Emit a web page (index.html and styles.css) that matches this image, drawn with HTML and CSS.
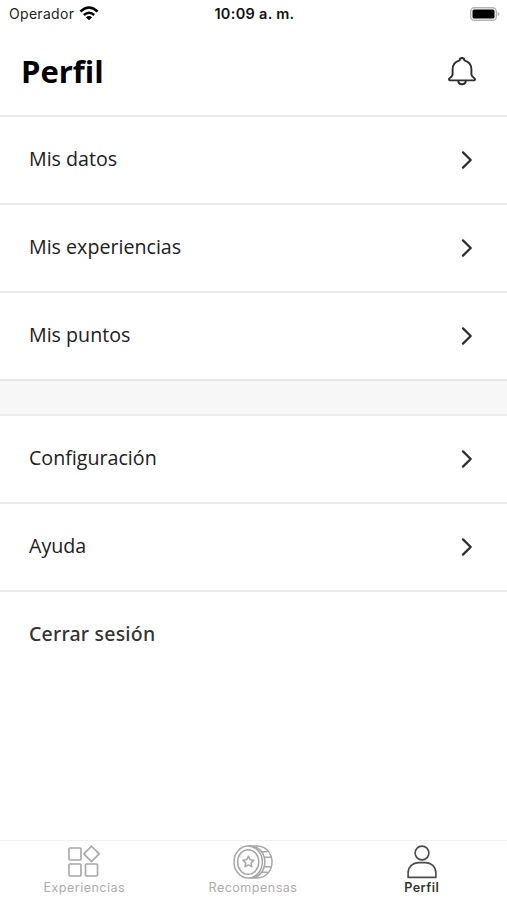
FILE: index.html
```html
<!DOCTYPE html>
<html lang="es">
<head>
<meta charset="utf-8">
<title>Perfil</title>
<link rel="stylesheet" href="styles.css">
</head>
<body>
<div class="screen">
  <div class="status">
    <div class="carrier"><span>Operador</span>
      <svg width="20" height="15" viewBox="0 0 20 15" fill="none" stroke="#000" stroke-width="2.4"><path d="M1.4 5.5Q10-2.3 18.6 5.5M4.8 9Q10 4.4 15.2 9"/><path d="M10 14.2L6.9 11.2Q10 8.6 13.1 11.2Z" fill="#000" stroke="none"/></svg>
    </div>
    <time class="clock">10:09 a. m.</time>
    <div class="battery">
      <svg width="30" height="14" viewBox="0 0 30 14"><rect x=".7" y=".7" width="25.6" height="12.6" rx="3.6" fill="#fff" stroke="#b5b5b5" stroke-width="1.4"/><rect x="2.5" y="2.5" width="22" height="9" rx="1.6" fill="#000"/><path d="M27.7 4.8Q29.6 5.6 29.6 7T27.7 9.2Z" fill="#b5b5b5"/></svg>
    </div>
  </div>
  <header class="header">
    <h1>Perfil</h1>
    <svg class="bell" width="30" height="30" viewBox="0 0 30 30" fill="none" stroke="#2d2d31" stroke-width="1.9" stroke-linejoin="round" stroke-linecap="round"><path d="M12.6 4.4Q12.8 2 15 2T17.4 4.4C22 5.6 24.4 9.3 24.4 13.6V18.7Q24.6 20.2 26.8 21.7C28.8 23 28.2 24.4 26.6 24.4H3.4C1.8 24.4 1.2 23 3.2 21.7Q5.4 20.2 5.6 18.7V13.6C5.6 9.3 8 5.6 12.6 4.4ZM11.2 24.6C11.4 29.4 18.6 29.4 18.8 24.6"/></svg>
  </header>
  <main>
    <nav class="list">
      <a class="row"><span>Mis datos</span><svg class="chev" viewBox="0 0 12 20"><path d="M2 2.4L9.7 10L2 17.6"/></svg></a>
      <a class="row"><span>Mis experiencias</span><svg class="chev" viewBox="0 0 12 20"><path d="M2 2.4L9.7 10L2 17.6"/></svg></a>
      <a class="row"><span>Mis puntos</span><svg class="chev" viewBox="0 0 12 20"><path d="M2 2.4L9.7 10L2 17.6"/></svg></a>
    </nav>
    <div class="gap"></div>
    <nav class="list">
      <a class="row"><span>Configuración</span><svg class="chev" viewBox="0 0 12 20"><path d="M2 2.4L9.7 10L2 17.6"/></svg></a>
      <a class="row"><span>Ayuda</span><svg class="chev" viewBox="0 0 12 20"><path d="M2 2.4L9.7 10L2 17.6"/></svg></a>
      <a class="row logout"><span>Cerrar sesión</span></a>
    </nav>
  </main>
  <footer class="tabs">
    <a class="tab"><svg width="34" height="34" viewBox="0 0 34 34" fill="none" stroke="#a6a6a6" stroke-width="1.6" stroke-linejoin="round"><rect x="2" y="3" width="12" height="12" rx="1"/><rect x="2" y="19" width="12" height="12" rx="1"/><rect x="18.5" y="19" width="12" height="12" rx="1"/><path d="M24.5 1.2L32.2 8.9L24.5 16.6L16.8 8.9Z"/></svg><span>Experiencias</span></a>
    <a class="tab"><svg width="40" height="34" viewBox="0 0 40 34" fill="none" stroke="#a6a6a6" stroke-width="1.5" stroke-linejoin="round"><path d="M16 1H24C44 1.5 44 32.5 24 33H16M18.5 1C36.2 3 36.2 31 18.5 33M28 6.8H34.5M31.4 12.2H38M31.4 21.8H38M28 27.2H34.5"/><ellipse cx="15.2" cy="17" rx="14.2" ry="16"/><ellipse cx="15.2" cy="17" rx="10.6" ry="12.3"/><path d="M15.4 11.2L17.1 14.7L20.9 15.2L18.1 17.9L18.8 21.7L15.4 19.9L12 21.7L12.7 17.9L9.9 15.2L13.7 14.7Z"/></svg><span>Recompensas</span></a>
    <a class="tab active"><svg width="32" height="34" viewBox="0 0 32 34" fill="none" stroke="#4a4a4a" stroke-width="1.6" stroke-linejoin="round"><circle cx="16" cy="8" r="6.9"/><path d="M2.1 32.4V28C2.1 21.5 7 17.6 12.5 17.6H19.5C25 17.6 29.9 21.5 29.9 28V32.4Z"/></svg><span>Perfil</span></a>
  </footer>
</div>
</body>
</html>
```
FILE: styles.css
```css
* { box-sizing: border-box; }
body { margin: 0; background: #fff; font-family: "Open Sans", "Noto Sans", sans-serif; color: #202023; }
svg { display: block; flex: none; }
.screen { height: 900px; display: flex; flex-direction: column; overflow: hidden; }
.status {
  height: 27px; padding: 0 7px 0 9px;
  display: grid; grid-template-columns: 1fr auto 1fr; align-items: center;
  font-family: Inter, sans-serif; font-size: 14px; color: #222;
}
.carrier { display: flex; align-items: center; gap: 5px; letter-spacing: .3px; }
.carrier svg { margin-top: -1px; }
.clock { font-weight: 600; font-size: 14.5px; letter-spacing: .3px; color: #111; }
.battery { justify-self: end; }
.header {
  height: 88px; padding: 0 30px 0 21px;
  display: flex; align-items: center; justify-content: space-between;
}
h1 { margin: 0; font-size: 31px; line-height: 42px; font-weight: 700; color: #000; font-variant-ligatures: none; }
.row {
  height: 88px; padding: 0 34px 0 29px; border-top: 2px solid #ebebeb;
  display: flex; align-items: center; justify-content: space-between;
  font-size: 19.65px;
}
.row span { padding-bottom: 3px; }
.chev { width: 12px; height: 20px; fill: none; stroke: #2d2d31; stroke-width: 2.3; stroke-linecap: round; stroke-linejoin: round; }
.row.logout { font-family: "Noto Sans", sans-serif; font-size: 19.5px; letter-spacing: .2px; font-weight: 500; color: #333; }
.gap { height: 35px; background: #f7f7f7; border-top: 2px solid #e6e6e6; }
.tabs {
  margin-top: auto; height: 60px; padding: 4px 1px 0 0; border-top: 1px solid #f0f0f0;
  display: grid; grid-template-columns: repeat(3, 1fr);
}
.tab {
  display: flex; flex-direction: column; align-items: center; gap: 1px;
  font-family: Inter, sans-serif; font-size: 12.6px; line-height: 16px; color: #acacac; letter-spacing: .45px;
}
.active { font-weight: 600; color: #333; }
```
